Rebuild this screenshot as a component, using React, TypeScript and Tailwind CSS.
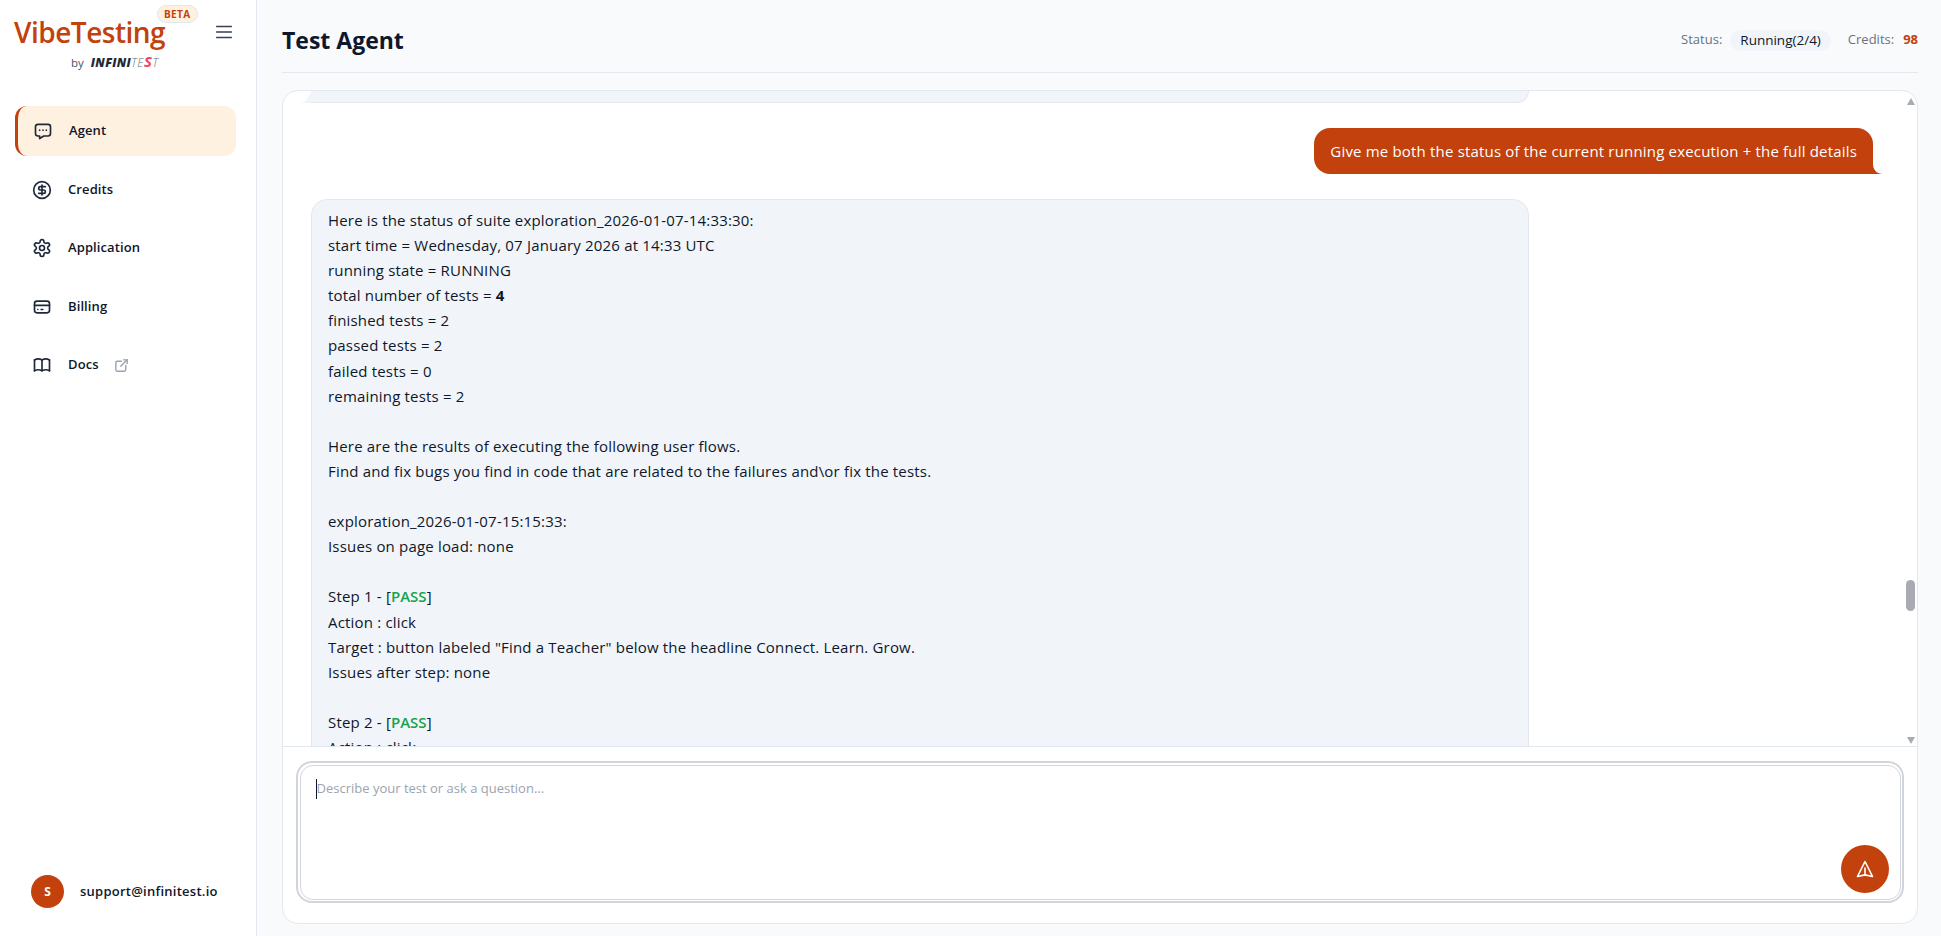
import { HiOutlinePaperAirplane } from "react-icons/hi";
import { TbBook, TbCreditCard, TbExternalLink, TbMessageDots } from "react-icons/tb";
import { LuCircleDollarSign, LuMenu, LuSettings } from "react-icons/lu";

const font = "font-['Open_Sans','Noto_Sans',sans-serif]";

const navItems = [
    { icon: TbMessageDots, label: "Agent", active: true },
    { icon: LuCircleDollarSign, label: "Credits" },
    { icon: LuSettings, label: "Application" },
    { icon: TbCreditCard, label: "Billing" },
    { icon: TbBook, label: "Docs", external: true },
];

function Sidebar() {
    return (
        <aside className="flex h-full w-[257px] shrink-0 flex-col border-r border-[#e2e8f0] bg-white">
            <div className="flex h-[85px] items-start justify-between pl-[14px] pr-[21px]">
                <div className="relative w-[184px]">
                    <div className="mt-[14px] text-[28px] leading-[36px] font-semibold tracking-[-0.5px] text-[#c2410c]">VibeTesting</div>
                    <span className="absolute left-[143px] top-[5px] rounded-full border border-[#e2e8f0] bg-[#fff1e0] px-[6px] text-[10px] leading-[16px] font-bold tracking-[0.4px] text-[#c2410c]">
                        BETA
                    </span>
                    <div className="mt-[5px] flex items-center pl-[57px] text-[11.5px] leading-[16px] text-[#475569]">
                        <span>by</span>
                        <span className="ml-[7px] text-[12px] italic tracking-[0.3px]">
                            <span className="font-extrabold text-[#1f2937]">INFINI</span>
                            <span className="font-light text-[#6b7280]">TE</span>
                            <span className="text-[15px] leading-[12px] font-bold text-[#f43f5e]">S</span>
                            <span className="font-light text-[#6b7280]">T</span>
                        </span>
                    </div>
                </div>
                <LuMenu className="mt-[21px] h-[22px] w-[22px] text-[#374151]" strokeWidth={1.75} />
            </div>

            <nav className="mt-[21px] flex flex-col gap-[8.5px] pl-[15px] pr-[20px]">
                {navItems.map((item) => {
                    const Icon = item.icon;
                    return (
                        <div
                            key={item.label}
                            className={`flex h-[50px] items-center gap-[16px] rounded-xl pl-[17px] text-[13px] font-semibold tracking-[0.1px] text-[#0f172a] ${
                                item.active ? "border-l-[3px] border-[#c2410c] bg-[#fff1e0] !pl-[15px]" : ""
                            }`}
                        >
                            <Icon className="h-[20px] w-[20px] shrink-0 text-[#1e293b]" strokeWidth={2} />
                            <span>{item.label}</span>
                            {item.external && <TbExternalLink className="ml-[-2px] h-[17px] w-[17px] text-[#9ca3af]" />}
                        </div>
                    );
                })}
            </nav>

            <div className="mt-auto mb-[28px] flex items-center gap-[16px] pl-[31px]">
                <div className="flex h-[33px] w-[33px] items-center justify-center rounded-full bg-[#c2410c] text-[12px] font-bold text-white">
                    S
                </div>
                <span className="text-[13px] font-semibold tracking-[0.25px] text-[#0f172a]">support@infinitest.io</span>
            </div>
        </aside>
    );
}

function Header() {
    return (
        <header className="flex h-[73px] shrink-0 items-center justify-between border-b border-[#e2e8f0] pt-[8px]">
            <h1 className="text-[23px] font-bold text-[#0f172a]">Test Agent</h1>
            <div className="flex items-center text-[13px] text-[#6b7280]">
                <span>Status:</span>
                <span className="ml-[8px] rounded-full bg-[#f1f5f9] px-[10px] text-[13.5px] leading-[21px] text-[#0f172a]">Running(2/4)</span>
                <span className="ml-[17px]">Credits:</span>
                <span className="ml-[9px] font-bold text-[#c2410c]">98</span>
            </div>
        </header>
    );
}

function Line({ children }: { children?: React.ReactNode }) {
    return <div className="h-[25.1px]">{children}</div>;
}

function StepHead({ n }: { n: number }) {
    return (
        <Line>
            Step {n} - [<span className="font-semibold tracking-normal text-[#16a34a]">PASS</span>]
        </Line>
    );
}

function Messages() {
    return (
        <div className="flex min-h-0 flex-1 flex-col gap-[25px] overflow-hidden border-b border-[#e2e8f0] pl-[28px] pr-[44px] text-[15px] tracking-[0.18px] text-[#0f172a]">
            <div className="relative h-[12px] w-[1218px] shrink-0 rounded-br-2xl border-r border-b border-[#e2e8f0] bg-[#f1f5f9]">
                <svg className="absolute -left-[10px] bottom-[-1px] h-[12px] w-[10px]" viewBox="0 0 10 12">
                    <path d="M10 0 C8 6 5 10 0 12 L10 12 Z" fill="#f1f5f9" />
                </svg>
            </div>

            <div className="relative shrink-0 self-end rounded-2xl rounded-br-none bg-[#c2410c] px-[16px] py-[10px] leading-[26px] text-white">
                Give me both the status of the current running execution + the full details
                <svg className="absolute -right-[10px] bottom-0 h-[10px] w-[10px]" viewBox="0 0 10 10">
                    <path d="M0 0 C0 6 4 10 10 10 L0 10 Z" fill="#c2410c" />
                </svg>
            </div>

            <div className="w-[1218px] shrink-0 rounded-2xl border border-[#e2e8f0] bg-[#f1f5f9] px-[16px] pt-[9px] pb-[10px]">
                <Line>Here is the status of suite exploration_2026-01-07-14:33:30:</Line>
                <Line>start time = Wednesday, 07 January 2026 at 14:33 UTC</Line>
                <Line>running state = RUNNING</Line>
                <Line>
                    total number of tests = <span className="font-bold">4</span>
                </Line>
                <Line>finished tests = 2</Line>
                <Line>passed tests = 2</Line>
                <Line>failed tests = 0</Line>
                <Line>remaining tests = 2</Line>
                <Line />
                <Line>Here are the results of executing the following user flows.</Line>
                <Line>Find and fix bugs you find in code that are related to the failures and\or fix the tests.</Line>
                <Line />
                <Line>exploration_2026-01-07-15:15:33:</Line>
                <Line>Issues on page load: none</Line>
                <Line />
                <StepHead n={1} />
                <Line>Action : click</Line>
                <Line>Target : button labeled "Find a Teacher" below the headline Connect. Learn. Grow.</Line>
                <Line>Issues after step: none</Line>
                <Line />
                <StepHead n={2} />
                <Line>Action : click</Line>
            </div>
        </div>
    );
}

function Scrollbar() {
    return (
        <div className="pointer-events-none absolute right-[2px] top-[7px] flex h-[646px] w-[9px] flex-col items-center justify-between">
            <div className="h-0 w-0 border-x-[4.5px] border-b-[7px] border-x-transparent border-b-[#a8abb2]" />
            <div className="absolute top-[482px] h-[31px] w-[9px] rounded-full bg-[#a8abb2]" />
            <div className="h-0 w-0 border-x-[4.5px] border-t-[7px] border-x-transparent border-t-[#a8abb2]" />
        </div>
    );
}

function Composer() {
    return (
        <div className="shrink-0 px-[13px] pb-[20px] pt-[14px]">
            <div className="relative h-[142px] rounded-2xl border-[2px] border-[#d1d5db] p-[1.5px]">
                <div className="h-full rounded-[13px] border border-[#d1d5db] bg-white px-[15px] py-[13px]">
                    <div className="flex h-[20px] items-center border-l border-[#0f172a] text-[13px] text-[#9ca3af]">
                        Describe your test or ask a question...
                    </div>
                </div>
                <button className="absolute bottom-[8px] right-[13px] flex h-[48px] w-[48px] items-center justify-center rounded-full bg-[#c2410c] text-white">
                    <HiOutlinePaperAirplane className="h-[20px] w-[20px]" />
                </button>
            </div>
        </div>
    );
}

export default function App() {
    return (
        <div className={`flex h-screen w-full overflow-hidden bg-[#f8fafc] ${font}`}>
            <Sidebar />
            <main className="flex min-w-0 flex-1 flex-col pl-[25px] pr-[23px]">
                <Header />
                <div className="relative mt-[17px] mb-[12px] flex min-h-0 flex-1 flex-col overflow-hidden rounded-2xl border border-[#e2e8f0] bg-white">
                    <Messages />
                    <Scrollbar />
                    <Composer />
                </div>
            </main>
        </div>
    );
}
